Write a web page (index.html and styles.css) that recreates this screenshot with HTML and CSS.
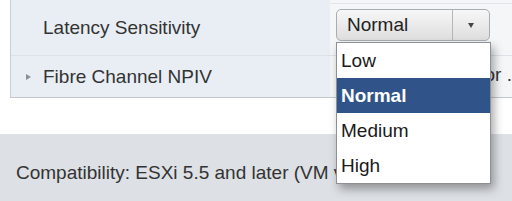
FILE: index.html
```html
<!DOCTYPE html>
<html lang="en">
<head>
    <meta charset="UTF-8">
    <title>VM Options</title>
    <link rel="stylesheet" href="styles.css">
</head>
<body>
    <div class="props">
        <div class="prop-row first">
            <div class="prop-label">Latency Sensitivity</div>
            <div class="prop-value">
                <div class="select-wrap">
                    <div class="select-box">
                        <span class="select-text">Normal</span>
                        <span class="select-arrow"></span>
                    </div>
                    <ul class="select-list">
                        <li>Low</li>
                        <li class="active">Normal</li>
                        <li>Medium</li>
                        <li>High</li>
                    </ul>
                </div>
            </div>
        </div>
        <div class="prop-row second">
            <div class="prop-label"><span class="twisty"></span>Fibre Channel NPIV</div>
            <div class="prop-value hint-cell"><span class="hint">Expand for .</span></div>
        </div>
    </div>

    <div class="footer">
        Compatibility: ESXi 5.5 and later (VM version 10)
    </div>
</body>
</html>
```

FILE: styles.css
```css
body {
    margin: 0;
    font-family: 'Liberation Sans', Arial, sans-serif;
    color: #333;
    background: #fff;
    width: 512px;
    height: 201px;
    overflow: hidden;
}

.props {
    margin-left: 10px;
    width: 502px;
    border-left: 1px solid #c9ced4;
    border-bottom: 1px solid #c4c8cd;
}

.prop-row {
    display: flex;
}

.prop-row.first {
    height: 55px;
    border-bottom: 1px solid #dde2e8;
}

.prop-row.second {
    height: 41px;
}

.prop-label {
    width: 319px;
    flex-shrink: 0;
    background: #e9eef4;
    display: flex;
    align-items: center;
    padding-left: 32px;
    box-sizing: border-box;
    font-size: 19px;
}

.prop-row.second .prop-label {
    padding-left: 15px;
}

.twisty {
    width: 0;
    height: 0;
    border-top: 3px solid transparent;
    border-bottom: 3px solid transparent;
    border-left: 5px solid #8c9095;
    margin-right: 12px;
    margin-top: 1px;
}

.prop-value {
    flex: 1;
    background: #f4f6f8;
    display: flex;
    align-items: center;
    padding-left: 6px;
    font-size: 19px;
    white-space: nowrap;
    overflow: hidden;
}

.prop-row.first .prop-value {
    align-items: flex-start;
    padding-top: 9px;
    overflow: visible;
    background: linear-gradient(#f4f6f8 3px, #e2e5e9 3px, #e2e5e9 4px, #f4f6f8 4px);
}

.hint-cell {
    justify-content: flex-end;
    padding-right: 1px;
}

.hint {
    margin-top: -4px;
}

.select-wrap {
    position: relative;
}

.select-box {
    width: 154px;
    height: 32px;
    box-sizing: border-box;
    border: 1px solid #a9adb2;
    border-radius: 5px;
    background: linear-gradient(#f7f7f7, #dedede);
    display: flex;
    align-items: center;
    font-size: 19px;
    color: #222;
}

.select-text {
    flex: 1;
    padding-left: 10px;
    border-right: 1px solid #b3b6ba;
    height: 100%;
    display: flex;
    align-items: center;
}

.select-arrow {
    width: 36px;
    display: flex;
    justify-content: center;
}

.select-arrow::before {
    content: "";
    border-left: 3px solid transparent;
    border-right: 3px solid transparent;
    border-top: 5px solid #444;
}

.select-list {
    position: absolute;
    top: 33px;
    left: 0;
    width: 155px;
    margin: 0;
    padding: 0;
    list-style: none;
    background: #fff;
    border: 1px solid #8d9196;
    box-sizing: border-box;
    box-shadow: 3px 5px 9px rgba(0, 0, 0, 0.35);
    font-size: 19px;
    color: #1a1a1a;
    z-index: 2;
}

.select-list li {
    height: 35px;
    line-height: 35px;
    padding-left: 4px;
}

.select-list li.active {
    background: #30548a;
    color: #fff;
    font-weight: bold;
}

.footer {
    margin-top: 36px;
    height: 67px;
    background: #dde0e5;
    padding-left: 16px;
    padding-top: 28px;
    box-sizing: border-box;
    font-size: 19px;
    color: #333;
    white-space: nowrap;
}
```
